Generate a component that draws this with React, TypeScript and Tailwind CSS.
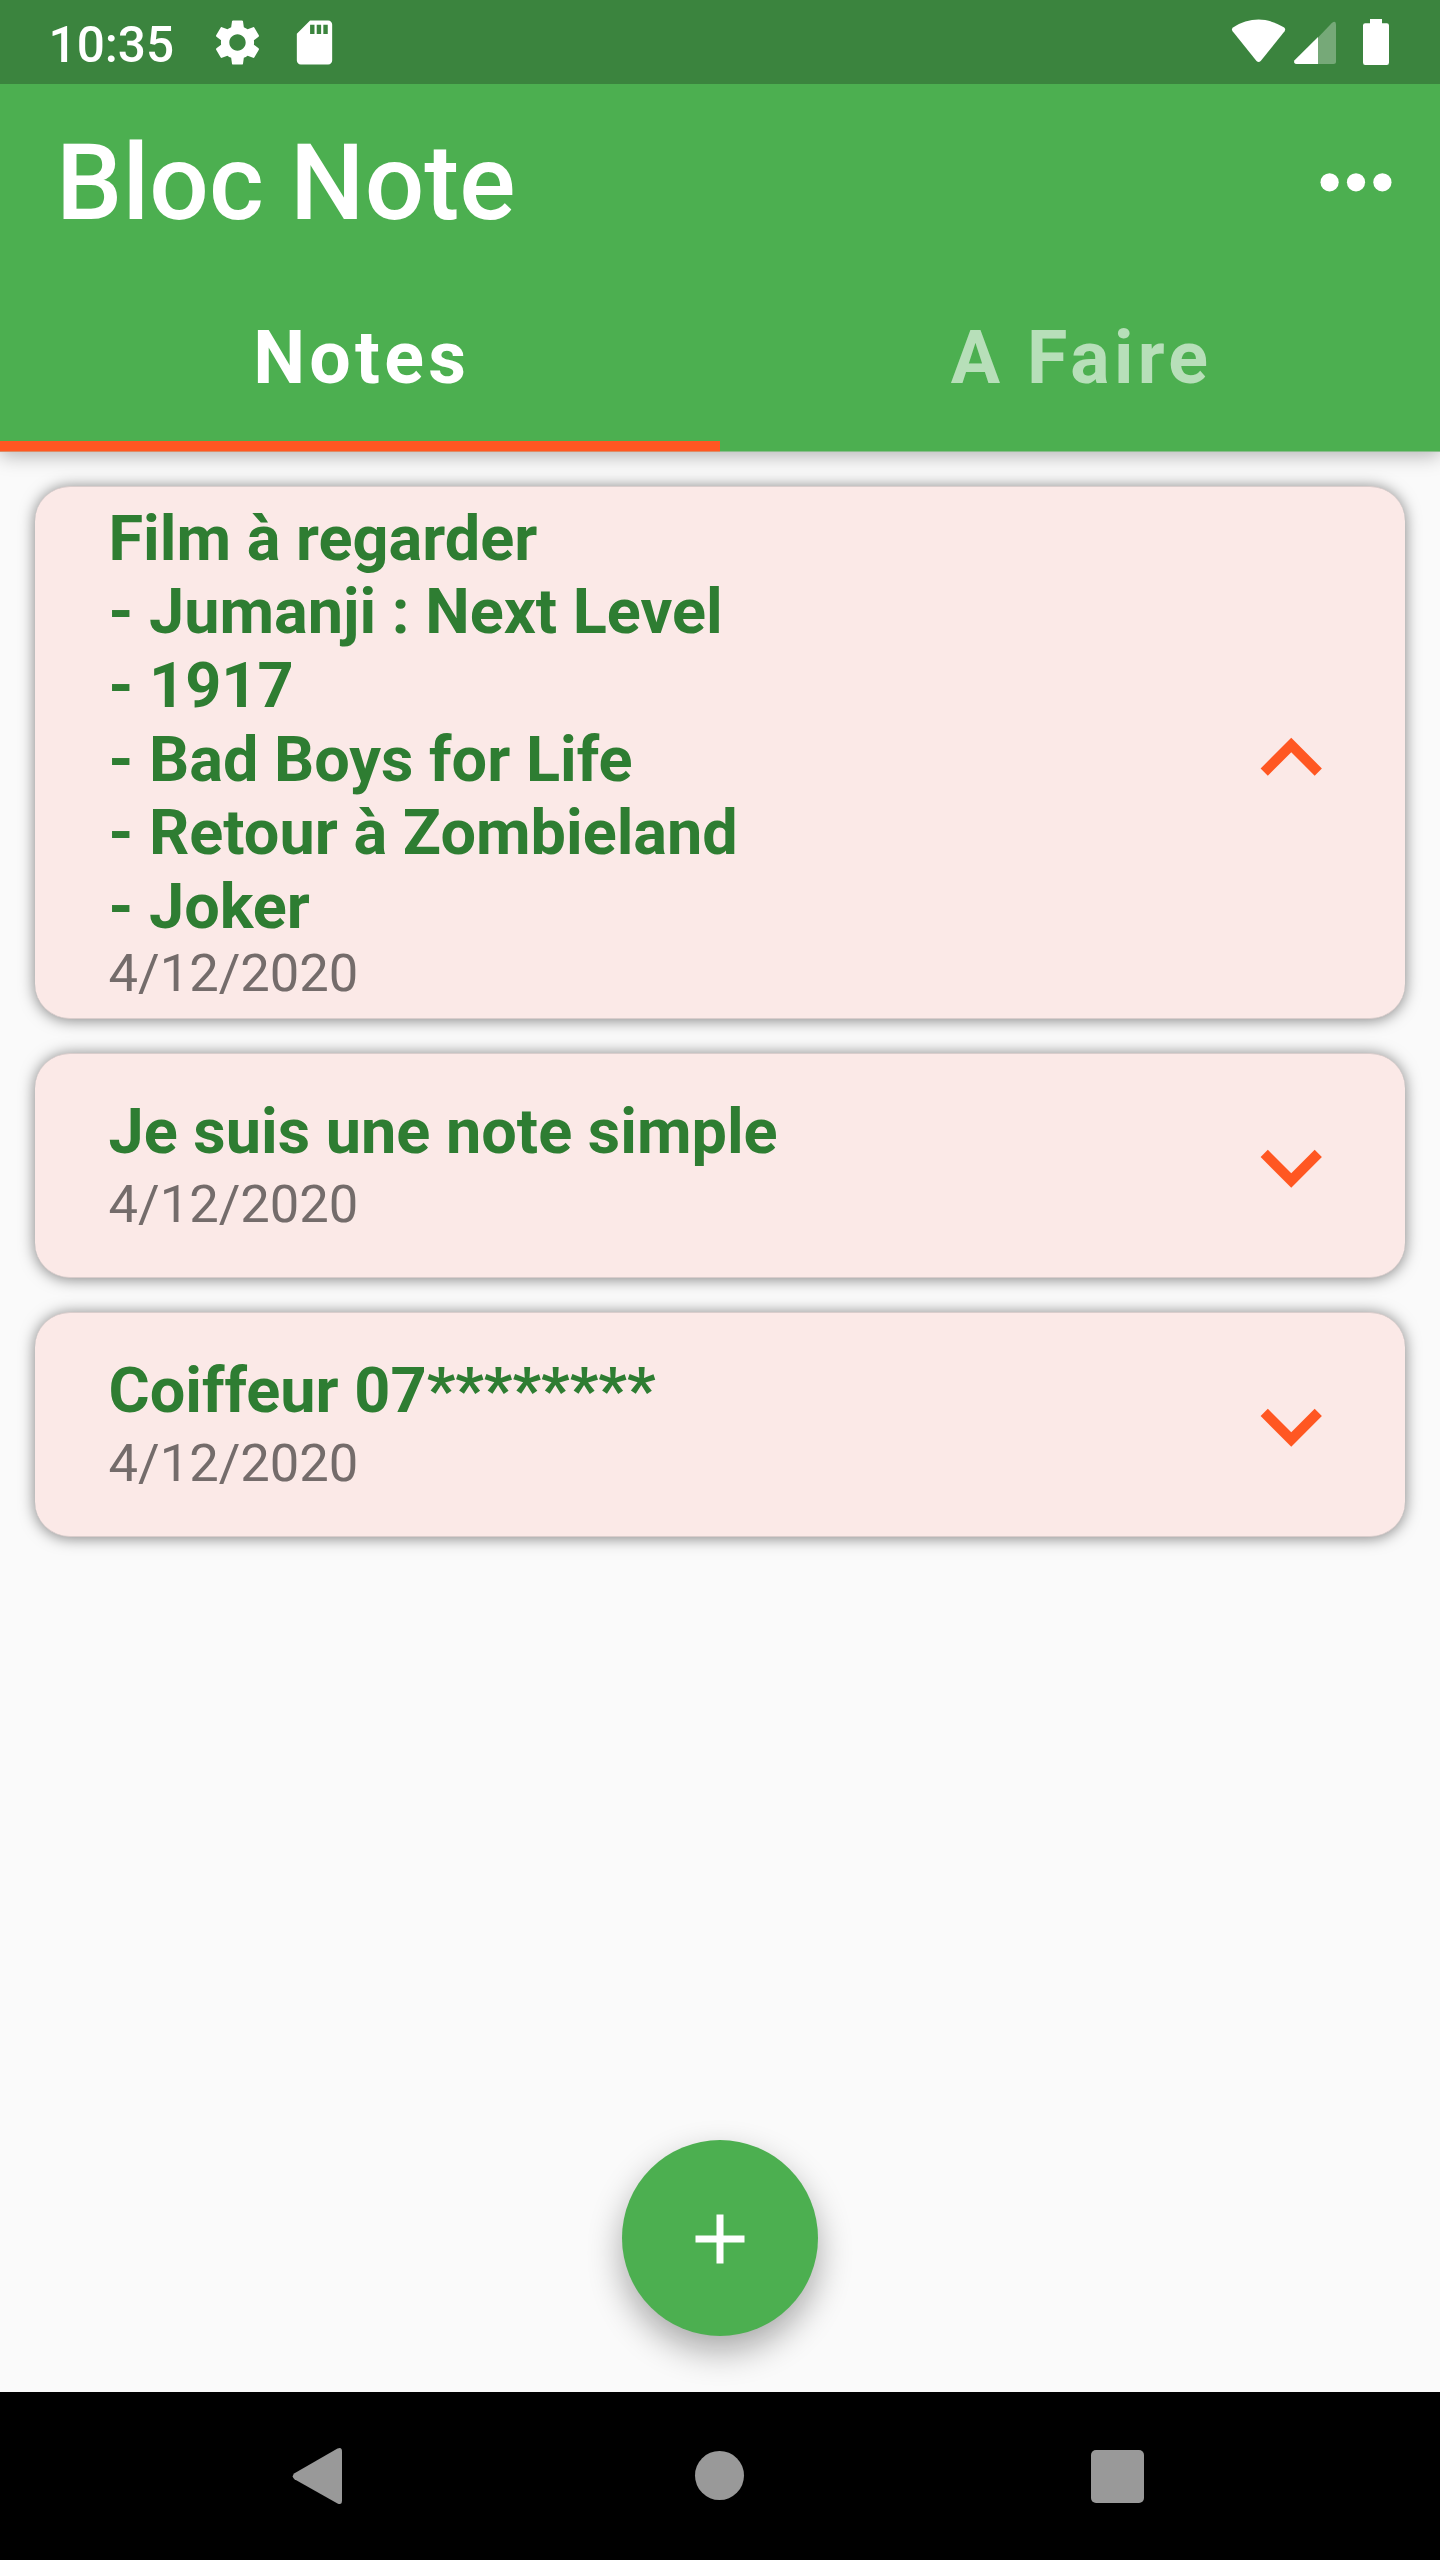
import React from "react";
import clsx from "clsx";

type Note = { lines: string[]; date: string; expanded: boolean };

const notes: Note[] = [
  {
    lines: [
      "Film à regarder",
      "- Jumanji : Next Level",
      "- 1917",
      "- Bad Boys for Life",
      "- Retour à Zombieland",
      "- Joker",
    ],
    date: "4/12/2020",
    expanded: true,
  },
  { lines: ["Je suis une note simple"], date: "4/12/2020", expanded: false },
  { lines: ["Coiffeur 07********"], date: "4/12/2020", expanded: false },
];

function GearIcon() {
  return (
    <svg viewBox="0 0 24 24" className="ml-[37px] mt-[16px] size-[53px]" fill="currentColor">
      <path d="M19.43 12.98c.04-.32.07-.64.07-.98s-.03-.66-.07-.98l2.11-1.65c.19-.15.24-.42.12-.64l-2-3.46c-.12-.22-.39-.3-.61-.22l-2.49 1c-.52-.4-1.08-.73-1.69-.98l-.38-2.65C14.46 2.18 14.25 2 14 2h-4c-.25 0-.46.18-.49.42l-.38 2.65c-.61.25-1.17.59-1.69.98l-2.49-1c-.23-.09-.49 0-.61.22l-2 3.46c-.13.22-.07.49.12.64l2.11 1.65c-.04.32-.07.65-.07.98s.03.66.07.98l-2.11 1.65c-.19.15-.24.42-.12.64l2 3.46c.12.22.39.3.61.22l2.49-1c.52.4 1.08.73 1.69.98l.38 2.65c.03.24.24.42.49.42h4c.25 0 .46-.18.49-.42l.38-2.65c.61-.25 1.17-.59 1.69-.98l2.49 1c.23.09.49 0 .61-.22l2-3.46c.12-.22.07-.49-.12-.64l-2.11-1.65zM12 15.7c-2.04 0-3.7-1.66-3.7-3.7s1.66-3.7 3.7-3.7 3.7 1.66 3.7 3.7-1.66 3.7-3.7 3.7z" />
    </svg>
  );
}

function StatusBar() {
  return (
    <div className="flex h-[84px] items-start bg-[#3b843e]">
      <span className="ml-[48.5px] mt-[16px] w-[125.5px] whitespace-nowrap text-[49.5px] font-medium leading-[58px]">
        10:35
      </span>
      <GearIcon />
      <svg viewBox="0 0 24 24" className="ml-[24px] mt-[16px] size-[53px]" fill="currentColor">
        <path d="M18.200 2H10L4 8v12.200c0 1 .8 1.800 1.800 1.800h12.400c1 0 1.800-.8 1.800-1.800V3.800c0-1-.8-1.800-1.800-1.800zM12 8.150h-2V4h2v4.150zm3 0h-2V4h2v4.150zm3 0h-2V4h2v4.150z" />
      </svg>
      <svg viewBox="0 0 160 50" className="ml-auto mr-[50px] mt-[17px] h-[50px] w-[160px]" fill="currentColor">
        <path d="M2.600 14.300Q1 12.300 3 10.600C10.500 5.400 20 2.600 28.600 2.600C37.200 2.600 46.700 5.400 54.200 10.600Q56 12.300 54.600 14.300L30.700 44Q28.600 45.900 26.500 44Z" />
        <path d="M88 20.500L101.600 6.200Q106 3 106 7.500V44.500Q106 47 103.500 47H88Z" opacity="0.3" />
        <path d="M88 19.900V47H66.500Q63.300 47 64.300 43.600Z" />
        <path d="M140 2H152V6.300H156.800Q159 6.300 159 8.500V45.500Q159 48 156.800 48H135.200Q133 48 133 45.500V8.500Q133 6.300 135.200 6.300H140Z" />
      </svg>
    </div>
  );
}

function Header() {
  return (
    <header className="relative z-10 bg-[#4caf50] text-white shadow-[0_4px_18px_rgba(0,0,0,0.28)]">
      <StatusBar />
      <div className="flex h-[196px] items-start justify-between pl-[56px]">
        <h1 className="mt-[38px] text-[105px] font-medium leading-[123px] tracking-[0.1px]">Bloc Note</h1>
        <svg viewBox="0 0 106 106" className="mr-[31px] mt-[49px] size-[106px] -translate-y-[4px]" fill="currentColor">
          <circle cx="26.600" cy="53.300" r="9.100" />
          <circle cx="53" cy="53.300" r="9.100" />
          <circle cx="79.400" cy="53.300" r="9.100" />
        </svg>
      </div>
      <nav className="grid h-[171px] grid-cols-2 text-center text-[73.5px] font-bold leading-[86px] tracking-[4.3px]">
        <div className="border-b-[10px] border-[#ff5722] pl-[3.5px] pt-[35px]">Notes</div>
        <div className="pl-[3px] pt-[35px] text-white/60">A Faire</div>
      </nav>
      <div className="grid h-px grid-cols-2">
        <div className="bg-[#dd8c66]" />
        <div className="bg-[#8cbd8e]" />
      </div>
    </header>
  );
}

function NoteCard({ note }: { note: Note }) {
  return (
    <article
      className={clsx(
        "flex items-start justify-between rounded-[35px] border-y border-[#dacdcc] bg-[#fbe9e7] pl-[73.5px] pr-[52.5px] shadow-[0_1px_15px_rgba(0,0,0,0.5)]",
        note.expanded ? "h-[533px] pt-[14.8px]" : "h-[225px] pt-[41px]",
      )}
    >
      <div>
        <div className="text-[63px] font-bold leading-[73.6px] text-[#2e7d32]">
          {note.lines.map((line) => (
            <p key={line} className="whitespace-nowrap">{line}</p>
          ))}
        </div>
        <p
          className={clsx(
            "text-[52.5px] leading-[62px] text-[#746c6b]",
            note.expanded ? "-mt-[1.4px]" : "mt-[4.5px]",
          )}
        >
          {note.date}
        </p>
      </div>
      <svg
        viewBox="0 0 24 24"
        className={clsx("size-[122.5px] text-[#ff5722]", note.expanded ? "mt-[195.2px]" : "mt-[10.5px]")}
        fill="currentColor"
      >
        {note.expanded ? (
          <path d="M12 8l-6 6 1.410 1.410L12 10.830l4.590 4.580L18 14z" />
        ) : (
          <path d="M16.590 8.590L12 13.170 7.410 8.590 6 10l6 6 6-6z" />
        )}
      </svg>
    </article>
  );
}

export default function App() {
  return (
    <div className="flex h-[2560px] w-[1440px] flex-col bg-[#fafafa] font-[Roboto,sans-serif]">
      <Header />
      <main className="flex flex-1 flex-col gap-[34px] px-[35px] pt-[34px]">
        {notes.map((note) => (
          <NoteCard key={note.lines[0]} note={note} />
        ))}
        <button
          aria-label="Ajouter"
          className="mx-auto mb-[56px] mt-auto flex size-[196px] items-center justify-center rounded-full bg-[#4caf50] text-white shadow-[0_15px_34px_rgba(0,0,0,0.33)]"
        >
          <svg viewBox="0 0 24 24" className="mt-[2px] size-[84px]" fill="currentColor">
            <path d="M19 13h-6v6h-2v-6H5v-2h6V5h2v6h6v2z" />
          </svg>
        </button>
      </main>
      <footer className="flex h-[168px] items-center bg-black text-[#999999]">
        <svg viewBox="0 0 50 58" className="ml-[292px] h-[58px] w-[50px]" fill="currentColor">
          <path d="M45.500 1.500Q50 -.5 50 4.500V53.500Q50 58.500 45.500 56.500L2.500 32.300Q-1 29.200 2.500 26.200Z" />
        </svg>
        <div className="mb-[1px] ml-[353px] size-[49px] rounded-full bg-[#999999]" />
        <div className="ml-[347px] size-[53px] rounded-[5px] bg-[#999999]" />
      </footer>
    </div>
  );
}
